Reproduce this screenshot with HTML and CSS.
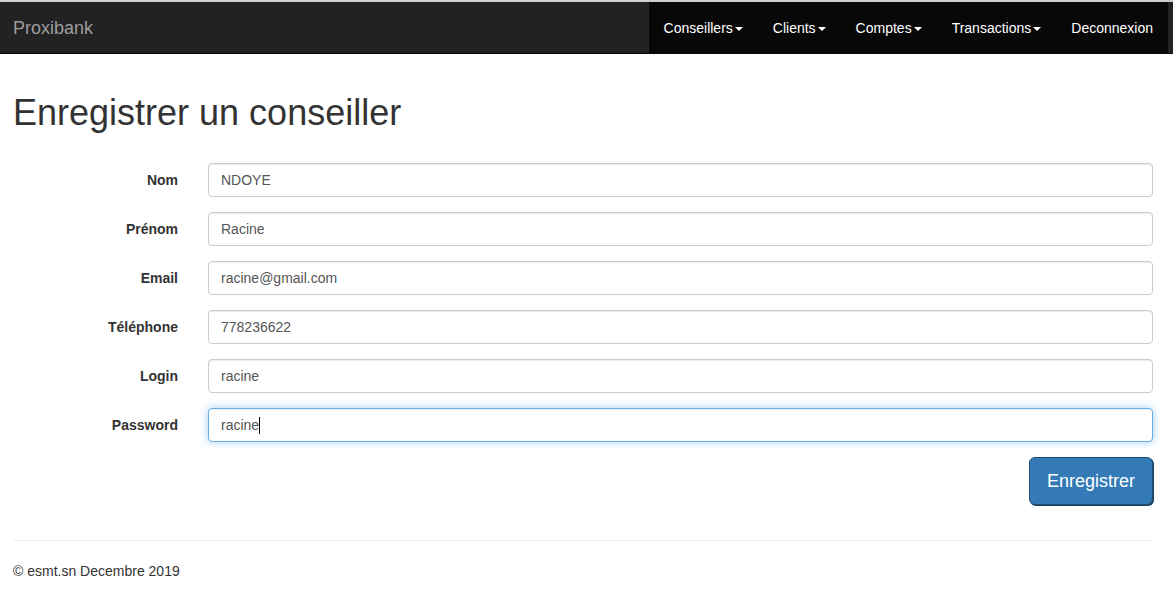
FILE: index.html
```html
<!DOCTYPE html>
<html lang="fr">
<head>
<meta charset="utf-8">
<title>Proxibank</title>
<link rel="stylesheet" href="styles.css">
</head>
<body>
<nav class="navbar">
  <div class="navbar-inner">
    <a class="brand" href="#">Proxibank</a>
    <ul class="nav">
      <li><a href="#">Conseillers<span class="caret"></span></a></li>
      <li><a href="#">Clients<span class="caret"></span></a></li>
      <li><a href="#">Comptes<span class="caret"></span></a></li>
      <li><a href="#">Transactions<span class="caret"></span></a></li>
      <li><a href="#">Deconnexion</a></li>
    </ul>
  </div>
</nav>
<main class="container">
  <h1 class="title">Enregistrer un conseiller</h1>
  <form class="form">
    <div class="form-group">
      <label class="label">Nom</label>
      <div class="field"><input class="form-control" type="text" value="NDOYE"></div>
    </div>
    <div class="form-group">
      <label class="label">Prénom</label>
      <div class="field"><input class="form-control" type="text" value="Racine"></div>
    </div>
    <div class="form-group">
      <label class="label">Email</label>
      <div class="field"><input class="form-control" type="text" value="racine@gmail.com"></div>
    </div>
    <div class="form-group">
      <label class="label">Téléphone</label>
      <div class="field"><input class="form-control" type="text" value="778236622"></div>
    </div>
    <div class="form-group">
      <label class="label">Login</label>
      <div class="field"><input class="form-control" type="text" value="racine"></div>
    </div>
    <div class="form-group">
      <label class="label">Password</label>
      <div class="field"><div class="form-control focused">racine<span class="text-caret"></span></div></div>
    </div>
    <div class="form-actions">
      <button type="button" class="btn-primary">Enregistrer</button>
    </div>
  </form>
  <hr class="divider">
  <footer class="footer">© esmt.sn Decembre 2019</footer>
</main>
</body>
</html>
```
FILE: styles.css
```css
html, body {
  margin: 0;
  padding: 0;
  background: #fff;
}
body {
  font-family: "Liberation Sans", Arial, Helvetica, sans-serif;
  font-size: 14px;
  line-height: 20px;
  color: #333;
  border-top: 2px solid #cfcfcf;
}
.navbar {
  background: #222;
  border-bottom: 1px solid #080808;
}
.navbar-inner {
  display: flex;
  justify-content: space-between;
  padding-right: 5px;
}
.brand {
  display: block;
  padding: 16px 13px 15px;
  font-size: 18px;
  line-height: 20px;
  color: #9d9d9d;
  text-decoration: none;
}
.nav {
  display: flex;
  margin: 0;
  padding: 0;
  list-style: none;
  background: #080808;
}
.nav a {
  display: block;
  padding: 16px 15px 15px;
  line-height: 20px;
  color: #fff;
  text-decoration: none;
}
.caret {
  display: inline-block;
  width: 0;
  height: 0;
  margin-left: 2px;
  vertical-align: middle;
  border-top: 4px solid #fff;
  border-left: 4px solid transparent;
  border-right: 4px solid transparent;
}
.container {
  display: flow-root;
  width: 1140px;
  padding: 19px 0 0 13px;
}
.title {
  margin: 20px 0 30px;
  font-size: 36px;
  font-weight: 500;
  line-height: 40px;
  color: #333;
}
.form-group {
  display: flex;
  margin-bottom: 15px;
}
.label {
  width: 165px;
  padding-top: 7px;
  text-align: right;
  font-weight: bold;
  flex: none;
}
.field {
  flex: 1;
  margin-left: 30px;
}
.form-control {
  display: block;
  box-sizing: border-box;
  width: 100%;
  height: 34px;
  padding: 6px 12px;
  font-family: inherit;
  font-size: 14px;
  line-height: 20px;
  color: #555;
  background: #fff;
  border: 1px solid #ccc;
  border-radius: 4px;
  box-shadow: inset 0 1px 1px rgba(0,0,0,.075);
  margin: 0;
}
.focused {
  border-color: #66afe9;
  box-shadow: inset 0 1px 1px rgba(0,0,0,.075), 0 0 8px rgba(102,175,233,.6);
}
.text-caret {
  display: inline-block;
  width: 1px;
  height: 17px;
  background: #000;
  vertical-align: -4px;
}
.form-actions {
  display: flex;
  justify-content: flex-end;
  margin-bottom: 35px;
}
.btn-primary {
  font-family: inherit;
  font-size: 18px;
  line-height: 24px;
  padding: 11px 17px;
  color: #fff;
  background: #337ab7;
  border: 1px solid #204d74;
  border-radius: 6px;
  box-shadow: 1px 1px 0 #1b3f5f;
  cursor: pointer;
}
.divider {
  margin: 20px 0;
  border: 0;
  border-top: 1px solid #eee;
}
.footer {
  font-size: 14px;
  line-height: 20px;
}
```
